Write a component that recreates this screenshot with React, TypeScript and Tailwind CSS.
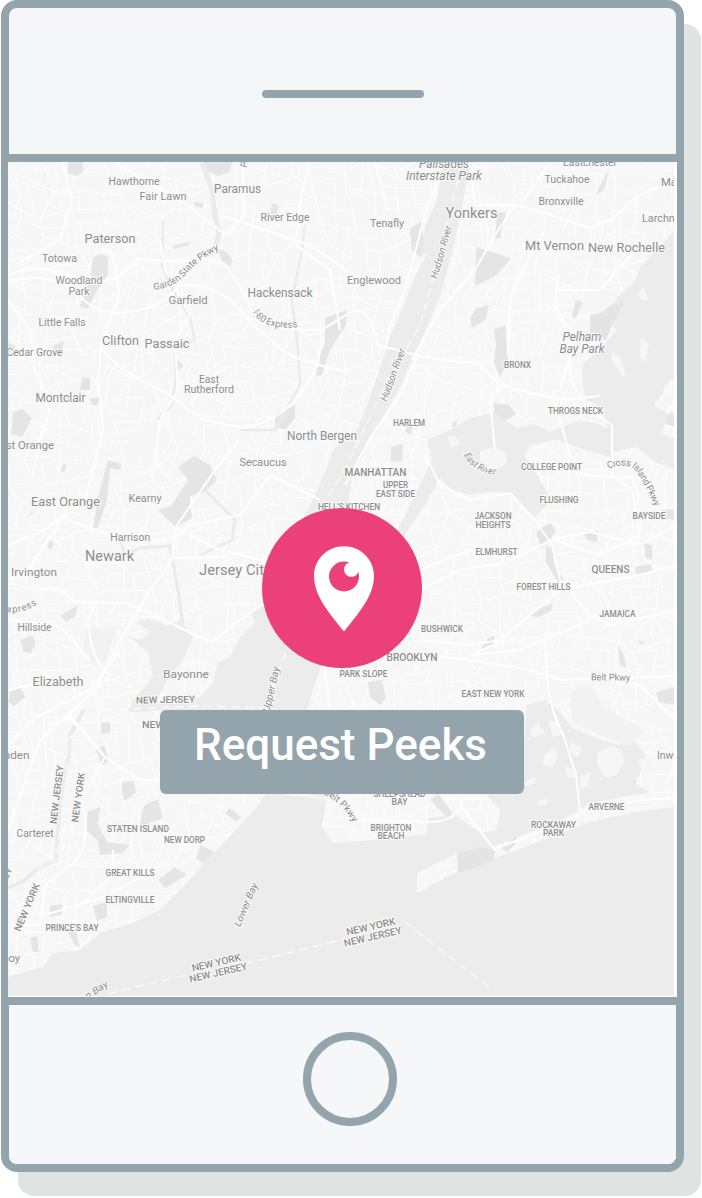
type Label = {
  t: string;
  x: number;
  y: number;
  w: number;
  s?: number;
  r?: number;
  i?: boolean;
  b?: boolean;
};

/* x is the centre of the label, y its baseline, w its drawn width */
const labels: Label[] = [
  { t: "Hawthorne", x: 134, y: 184.5, w: 51, s: 11 },
  { t: "Fair Lawn", x: 163, y: 200, w: 47, s: 11 },
  { t: "Paramus", x: 237.5, y: 193, w: 47, s: 12 },
  { t: "River Edge", x: 285, y: 221, w: 49, s: 11 },
  { t: "Tenafly", x: 387, y: 226.5, w: 34, s: 11 },
  { t: "Paterson", x: 110, y: 243, w: 51, s: 13 },
  { t: "Totowa", x: 59.5, y: 262, w: 35, s: 11 },
  { t: "Woodland", x: 79, y: 284, w: 47, s: 11 },
  { t: "Park", x: 79, y: 295, w: 21, s: 11 },
  { t: "Garfield", x: 188, y: 304, w: 39, s: 11 },
  { t: "Hackensack", x: 280, y: 296.5, w: 65, s: 12 },
  { t: "Englewood", x: 374, y: 284, w: 54, s: 11 },
  { t: "Little Falls", x: 62, y: 326, w: 47, s: 11 },
  { t: "Clifton", x: 120.5, y: 345, w: 37, s: 13 },
  { t: "Passaic", x: 167, y: 348, w: 45, s: 13 },
  { t: "Cedar Grove", x: 34.5, y: 356, w: 56, s: 11 },
  { t: "East", x: 209, y: 382.5, w: 20, s: 11 },
  { t: "Rutherford", x: 209, y: 392.5, w: 50, s: 11 },
  { t: "Montclair", x: 60.5, y: 402, w: 50, s: 12 },
  { t: "North Bergen", x: 322, y: 439.5, w: 70, s: 12 },
  { t: "Secaucus", x: 263, y: 465.5, w: 47, s: 11 },
  { t: "West Orange", x: 22, y: 449, w: 64, s: 11 },
  { t: "East Orange", x: 65.5, y: 505.5, w: 69, s: 12.5 },
  { t: "Kearny", x: 145, y: 502, w: 33, s: 11 },
  { t: "Harrison", x: 130.3, y: 541, w: 40, s: 11 },
  { t: "Newark", x: 109.5, y: 560.5, w: 49, s: 14 },
  { t: "Jersey City", x: 235, y: 574.5, w: 72, s: 14 },
  { t: "Irvington", x: 34, y: 576, w: 46, s: 11 },
  { t: "Hillside", x: 34.5, y: 630.5, w: 34, s: 11 },
  { t: "Elizabeth", x: 58, y: 686, w: 51, s: 12.5 },
  { t: "Bayonne", x: 186, y: 677.5, w: 46, s: 11.5 },
  { t: "Linden", x: 12, y: 759, w: 35, s: 11 },
  { t: "Carteret", x: 35, y: 837, w: 37, s: 11 },
  { t: "Perth Amboy", x: -12, y: 961.5, w: 64, s: 11.5 },
  { t: "Palisades", x: 444, y: 168, w: 50, s: 12, i: true },
  { t: "Interstate Park", x: 444, y: 180, w: 76, s: 12, i: true },
  { t: "Yonkers", x: 471.5, y: 217.5, w: 52, s: 14 },
  { t: "Eastchester", x: 590, y: 166, w: 54, s: 11 },
  { t: "Tuckahoe", x: 567, y: 183, w: 45, s: 11 },
  { t: "Bronxville", x: 561, y: 204.5, w: 45, s: 11 },
  { t: "Mamaroneck", x: 694, y: 185.5, w: 66, s: 11 },
  { t: "Larchmont", x: 668, y: 222, w: 52, s: 11 },
  { t: "Mt Vernon", x: 554.5, y: 250, w: 59, s: 12.5 },
  { t: "New Rochelle", x: 626.5, y: 252, w: 77, s: 12.5 },
  { t: "Pelham", x: 582, y: 341, w: 39, s: 12, i: true },
  { t: "Bay Park", x: 582, y: 353, w: 45, s: 12, i: true },
  { t: "BRONX", x: 517.5, y: 368, w: 27, s: 8.5, b: true },
  { t: "THROGS NECK", x: 575.5, y: 413.5, w: 55, s: 8.5, b: true },
  { t: "HARLEM", x: 409, y: 425.5, w: 32, s: 8.5, b: true },
  { t: "MANHATTAN", x: 375.5, y: 476, w: 62, s: 10, b: true },
  { t: "UPPER", x: 395.5, y: 488, w: 25, s: 8.5, b: true },
  { t: "EAST SIDE", x: 395.5, y: 496.5, w: 39, s: 8.5, b: true },
  { t: "HELL'S KITCHEN", x: 349, y: 509.5, w: 62, s: 8.5, b: true },
  { t: "COLLEGE POINT", x: 551.5, y: 470, w: 61, s: 8.5, b: true },
  { t: "FLUSHING", x: 559, y: 503, w: 39, s: 8.5, b: true },
  { t: "BAYSIDE", x: 649, y: 518.5, w: 33, s: 8.5, b: true },
  { t: "JACKSON", x: 493, y: 519, w: 37, s: 8.5, b: true },
  { t: "HEIGHTS", x: 493, y: 527.5, w: 35, s: 8.5, b: true },
  { t: "ELMHURST", x: 496.5, y: 555, w: 42, s: 8.5, b: true },
  { t: "QUEENS", x: 610.5, y: 573, w: 38, s: 10, b: true },
  { t: "FOREST HILLS", x: 543.5, y: 589.5, w: 54, s: 8.5, b: true },
  { t: "JAMAICA", x: 617.5, y: 617, w: 36, s: 8.5, b: true },
  { t: "BUSHWICK", x: 442, y: 631.5, w: 42, s: 8.5, b: true },
  { t: "BROOKLYN", x: 412, y: 660.5, w: 51, s: 10, b: true },
  { t: "PARK SLOPE", x: 363.5, y: 677, w: 48, s: 8.5, b: true },
  { t: "EAST NEW YORK", x: 493, y: 697, w: 63, s: 8.5, b: true },
  { t: "Belt Pkwy", x: 610.5, y: 680.5, w: 39, s: 9.5, r: 1 },
  { t: "NEW JERSEY", x: 165.5, y: 703, w: 59, s: 9.5, b: true, r: -1 },
  { t: "NEW YORK", x: 168, y: 728, w: 52, s: 9.5, b: true },
  { t: "SHEEPSHEAD", x: 399.5, y: 797, w: 52, s: 8.5, b: true },
  { t: "BAY", x: 399.5, y: 805, w: 16, s: 8.5, b: true },
  { t: "BRIGHTON", x: 391, y: 830.5, w: 41, s: 8.5, b: true },
  { t: "BEACH", x: 391, y: 838.5, w: 27, s: 8.5, b: true },
  { t: "ARVERNE", x: 606.5, y: 809.5, w: 36, s: 8.5, b: true },
  { t: "ROCKAWAY", x: 553.5, y: 827.5, w: 45, s: 8.5, b: true },
  { t: "PARK", x: 553.5, y: 836, w: 21, s: 8.5, b: true },
  { t: "Inwood", x: 674, y: 759, w: 34, s: 11 },
  { t: "STATEN ISLAND", x: 138, y: 832, w: 62, s: 8.5, b: true },
  { t: "NEW DORP", x: 184.5, y: 843, w: 41, s: 8.5, b: true },
  { t: "GREAT KILLS", x: 130, y: 876, w: 49, s: 8.5, b: true },
  { t: "ELTINGVILLE", x: 130, y: 902.5, w: 49, s: 8.5, b: true },
  { t: "PRINCE'S BAY", x: 72, y: 930.5, w: 53, s: 8.5, b: true },
  { t: "NEW JERSEY", x: 60, y: 795, w: 59, s: 9.5, b: true, r: -83 },
  { t: "NEW YORK", x: 81.5, y: 798, w: 50, s: 9.5, b: true, r: -82 },
  { t: "NEW YORK", x: 30, y: 908.5, w: 51, s: 9.5, b: true, r: -67 },
  { t: "NEW JERSEY", x: 0, y: 896, w: 59, s: 9.5, b: true, r: -65 },
  { t: "NEW YORK", x: 217, y: 966, w: 50, s: 10, b: true, r: -13 },
  { t: "NEW JERSEY", x: 219, y: 976, w: 59, s: 10, b: true, r: -13 },
  { t: "NEW YORK", x: 371.5, y: 930, w: 50, s: 10, b: true, r: -13 },
  { t: "NEW JERSEY", x: 373.5, y: 940, w: 59, s: 10, b: true, r: -13 },
  { t: "Hudson River", x: 444.5, y: 253, w: 54, s: 10, i: true, r: -74 },
  { t: "Hudson River", x: 396, y: 376, w: 55, s: 10, i: true, r: -70 },
  { t: "Upper Bay", x: 274.5, y: 690, w: 46, s: 10, i: true, r: -77 },
  { t: "Lower Bay", x: 249, y: 906, w: 46, s: 10, i: true, r: -67 },
  { t: "Raritan Bay", x: 87, y: 1000, w: 52, s: 10, i: true, r: -33 },
  { t: "Pkwy", x: 250, y: 158, w: 22, s: 9.5, r: -70 },
];

const curved = [
  { id: "gsp", t: "Garden State Pkwy", d: "M154 290 Q176 287 187 273 Q198 260 218 250", w: 78, s: 9.5, i: false },
  { id: "i80", t: "I-80 Express", d: "M253 312 Q263 331 299 327", w: 50, s: 9.5, i: false },
  { id: "er", t: "East River", d: "M464 455 Q473 473 498 475", w: 39, s: 9.5, i: true },
  { id: "cip", t: "Cross Island Pkwy", d: "M608 469 Q630 460 638 474 Q648 490 655 507", w: 70, s: 9.5, i: false },
  { id: "ex", t: "Express", d: "M1 611 Q20 616 37 604", w: 38, s: 9.5, i: false },
  { id: "bp", t: "Belt Pkwy", d: "M323 794 Q343 803 353 823", w: 42, s: 9.5, i: false },
];

/* Street mesh: a jittered lattice with some of its edges left out */
function mesh(x0: number, y0: number, x1: number, y1: number, step: number, skip: number, seed: number): string {
  let s = seed;
  const rnd = () => {
    s = (s * 16807) % 2147483647;
    return s / 2147483647;
  };
  const cols = Math.ceil((x1 - x0) / step) + 1;
  const rows = Math.ceil((y1 - y0) / step) + 1;
  const pts: [number, number][][] = [];
  for (let j = 0; j < rows; j++) {
    const row: [number, number][] = [];
    for (let i = 0; i < cols; i++) {
      row.push([
        Math.round(x0 + i * step + (rnd() - 0.5) * step * 0.8 + Math.sin(j * 0.35) * 9),
        Math.round(y0 + j * step + (rnd() - 0.5) * step * 0.8 + Math.sin(i * 0.3) * 10),
      ]);
    }
    pts.push(row);
  }
  let d = "";
  for (let j = 0; j < rows; j++) {
    for (let i = 0; i < cols; i++) {
      const [x, y] = pts[j][i];
      if (i + 1 < cols && rnd() > skip) d += `M${x} ${y}L${pts[j][i + 1][0]} ${pts[j][i + 1][1]}`;
      if (j + 1 < rows && rnd() > skip) d += `M${x} ${y}L${pts[j + 1][i][0]} ${pts[j + 1][i][1]}`;
    }
  }
  return d;
}

const streets = mesh(-10, 150, 700, 1010, 16, 0.25, 4211);
const lanes = mesh(-10, 150, 700, 1010, 27, 0.25, 977);

const water = [
  // Hudson and upper bay
  "M443 162L437 200L425 227L421 255L428 252L417 273L403 307L390 337L380 367L370 397L357 430L333 450L320 485L305 515L285 560L263 603L250 613L255 622L240 637L230 657L217 663L213 683L200 697L175 704L140 703L138 710L230 712L250 740L262 760L280 790L325 797L308 750L307 710L313 690L320 670L330 640L335 580L345 530L352 477L370 440L380 423L400 387L417 350L430 320L440 297L450 260L457 233L465 190L472 162Z",
  // Newark bay
  "M180 620L166 626L160 622L147 619L136 622L151 632L140 640L128 636L148 652L153 677L133 700L128 712L150 712L158 697L168 679L183 660L193 637Z",
  // Lower bay and the ocean
  "M267 792L257 807L233 833L207 860L187 883L160 910L133 923L100 933L80 950L53 953L43 967L8 977L8 998L676 998L676 807L640 811L590 822L517 850L460 870L417 893L417 873L457 853L493 850L480 833L455 815L428 818L427 834L350 842L333 843L322 827L326 800Z",
  // Long Island sound
  "M676 228L663 243L640 267L634 283L617 297L608 320L617 330L597 352L583 363L582 380L586 400L597 405L606 420L610 452L637 447L655 462L676 470L676 440L660 433L668 420L661 398L665 385L676 377Z",
  // East river
  "M450 430L470 418L494 413L517 428L535 424L550 432L580 420L598 424L613 432L613 458L577 447L557 440L530 445L524 455L540 480L552 500L533 519L515 497L497 491L470 495L452 490L440 478L425 505L408 530L395 560L385 556L400 525L415 495L432 460L427 440Z",
  // Jamaica bay
  "M527 705L545 700L560 712L572 728L595 738L618 745L632 738L646 755L640 775L632 783L650 792L590 803L560 822L530 832L517 838L494 846L480 833L497 830L500 810L487 795L485 770L510 765L524 745Z",
];

const parks = [
  "M204 162L232 162L230 172L218 176L206 170Z",
  "M68 162L83 162L83 172L76 176L68 173Z",
  "M93 258Q101 250 108 258L108 274L96 292L88 309L80 306L90 280Z",
  "M173 246L188 242L189 245L174 249Z",
  "M194 202L203 203L203 208L195 207Z",
  "M272 203L279 206L276 215L270 213Z",
  "M218 250Q228 249 232 260L230 267L222 262Z",
  "M325 318L347 310L346 325L330 350L322 375L316 376L318 358L325 345Z",
  "M275 415L295 405L295 418L286 429L275 428Z",
  "M13 412L22 409L32 418L22 437L11 434Z",
  "M82 377L90 378L90 390L80 390Z",
  "M54 345L64 341L62 350L53 356Z",
  "M90 398L100 398L97 406L91 404Z",
  "M7 342L15 346L15 353L8 352Z",
  "M178 360L184 366L178 370L175 366Z",
  "M108 460L122 464L119 470L110 468L107 500L98 528L93 528L98 498Z",
  "M60 472L64 463L67 466L64 472Z",
  "M50 540L54 543L51 550L47 546Z",
  "M27 517L36 508L32 514L27 518Z",
  "M178 467L194 456L210 465L217 480L204 492L190 496L192 518L176 527L158 510L171 506L188 480Z",
  "M20 640L32 635L36 643L31 653L24 652Z",
  "M10 692L20 687L25 697L14 706L8 702Z",
  "M60 616L78 605L75 616L66 622Z",
  "M101 723L110 722L110 733L101 734Z",
  "M96 750L104 745L109 760L102 766Z",
  "M122 782L134 781L136 793L124 801L122 790Z",
  "M145 805L158 799L163 819L150 822L140 830L142 812Z",
  "M88 812L100 807L98 824L107 842L130 845L122 853L100 855L98 841L86 830Z",
  "M225 813L230 808L241 817L236 822Z",
  "M200 845L217 853L207 865L196 859Z",
  "M158 880L175 867L187 875L165 888Z",
  "M50 906L62 904L62 914L50 917Z",
  "M93 906L107 902L107 917L97 921Z",
  "M30 938L37 936L39 952L33 952Z",
  "M67 930L75 927L80 948L74 944Z",
  "M410 229L421 221L424 240L421 258L412 250Z",
  "M497 213L506 212L500 238L495 239Z",
  "M476 247L511 258L498 274L488 280L475 286Z",
  "M476 308L489 305L486 320L472 328L470 318Z",
  "M494 330L505 325L508 360L500 378L494 363L496 346Z",
  "M602 182L609 170L604 190L595 195Z",
  "M576 300L583 302L576 318L572 316Z",
  "M590 315L601 313L620 298L624 306L613 325L600 338L590 333Z",
  "M494 403L509 405L516 414L505 421L494 414Z",
  "M452 424L457 420L456 427L452 427Z",
  "M391 447L403 444L402 461L391 462Z",
  "M407 423L413 425L411 435L405 432Z",
  "M536 532L550 523L556 530L549 542L541 548Z",
  "M546 546L552 548L555 566L564 580L558 582L546 562Z",
  "M584 534L598 531L597 543L588 540Z",
  "M530 616L541 608L553 603L551 611L538 617Z",
  "M479 653L488 638L495 636L492 647Z",
  "M635 567L650 564L654 572L636 574Z",
  "M644 543L652 545L652 560L646 558Z",
  "M637 640L645 642L642 645Z",
  "M618 645L624 655L626 668L620 665Z",
  "M368 682L382 680L386 698L380 705L370 697Z",
  "M430 800L438 794L453 813L448 818Z",
  "M625 786L630 777L636 778L635 792L628 796Z",
  "M656 693L676 686L676 705L659 702Z",
  "M664 417L672 412L676 418L676 427L665 424Z",
  "M661 510L676 509L676 519L666 519Z",
];

const islands = [
  "M480 451L493 447L506 452L507 462L498 470L487 468L480 460Z",
  "M448 437L456 436L461 445L450 447Z",
  "M643 287L648 299L644 302L637 294Z",
  "M641 338L649 344L645 362L640 358Z",
  "M612 350L620 358L626 374L622 377L612 360Z",
  "M605 293L613 290L610 306L597 313L585 310L584 292Z",
  "M545 754L554 747L558 758L552 767L542 765Z",
  "M526 781L536 777L534 784L525 786Z",
  "M565 767L577 770L576 778L567 777Z",
  "M598 752L610 746L622 750L624 762L617 775L606 778L597 765Z",
  "M580 776L590 772L588 786L580 790Z",
  "M538 800L548 799L547 805L538 805Z",
  "M639 760L650 755L655 772L643 776Z",
  "M548 720L557 722L560 735L553 737Z",
  "M530 730L538 722L545 733L534 738Z",
  "M654 403L666 392L672 398L666 412L657 408Z",
  "M571 742L582 748L578 757L570 752Z",
];

const highways = [
  "M8 275Q40 262 75 277T138 259Q170 262 195 260T226 265Q240 285 247 300Q255 320 270 325T322 330Q340 318 352 312T372 325L378 345L412 354Q440 361 478 363L500 385L560 400L600 396",
  "M8 281Q50 272 75 290Q95 318 130 312T180 285Q215 282 240 310T290 355Q320 367 350 372",
  "M103 350Q120 372 165 392L203 420L245 428Q280 420 300 395L318 365L322 330",
  "M8 300L30 330L35 370L50 410L40 440",
  "M110 250Q120 275 118 300L102 340L98 380L103 430L85 500L62 518L110 535L150 540Q175 540 190 525L240 515L270 475L320 500",
  "M375 162L385 200M440 175L425 215L405 290L390 325L385 350",
  "M240 440L215 470L175 528L172 560L150 590L120 640L95 690L40 740L8 830",
  "M172 558L225 557M175 528L215 548L260 560L300 560",
  "M62 518L25 575L8 580M40 590Q55 582 75 602L125 603Q165 620 195 635L212 642L240 620L270 600",
  "M95 603L88 620Q90 660 110 675L70 715L105 757L140 780L170 780",
  "M8 745L35 718L90 690L120 650M105 757L82 800Q92 840 75 862L45 885L40 925L8 925M45 915L110 895L160 865",
  "M50 725L70 718L105 757M113 850L113 875L75 910",
  "M418 354L400 395L372 435L345 485M412 360L440 310L475 270L495 235L515 205L545 213L590 228L610 220L640 195L674 180",
  "M545 230L525 265L510 300L508 355M555 290L600 290L640 245M500 385L490 400L495 450M558 275L555 305L575 340L560 390",
  "M570 335L570 380L590 410L612 425L612 475L632 490L640 535L600 555L555 540",
  "M553 390L560 420L570 455L582 475L632 478L640 500",
  "M425 455L440 485L470 500L510 493L535 520L552 545L560 580L590 615L610 625L676 610",
  "M420 570L470 550L510 560L552 540L590 532L640 545L676 525",
  "M421 590L460 570L505 563M421 640L470 645L500 640L560 590L640 575L676 565",
  "M421 655L470 660L530 670L562 680L676 676M505 640L470 655L520 650L590 620",
  "M545 640L548 690L557 725M590 677L640 685L676 720M552 709L565 740L576 775L580 812",
  "M325 670L330 710M580 812L640 800L676 798M495 850L460 805M493 850L580 815",
  "M350 820L430 822Q460 822 462 798M62 162L72 200L60 240L20 262M310 162L300 200L296 245L330 270L340 330",
  "M243 162L244 215L226 235L180 200L140 178L115 162M220 215L310 245L360 280M470 162L475 205L520 205L550 162",
  "M8 620L60 626L90 660M8 690L50 680M8 545L45 530L85 500M160 240L165 270L190 315L175 340L178 390L160 420L155 460L170 480",
];

const dense = [
  { p: "M372 442L400 400L425 360L432 372L420 440L432 450L410 500L385 540L330 540L345 490Z", f: "url(#g1)" },
  { p: "M432 330L490 290L495 400L440 430L410 440Z", f: "url(#g1)" },
  { p: "M422 540L530 520L540 600L510 660L421 650Z", f: "url(#g2)" },
  { p: "M320 675L500 655L520 710L320 712Z", f: "url(#g3)" },
  { p: "M555 500L660 495L674 660L570 660Z", f: "url(#g2)" },
  { p: "M335 797L428 797L425 825L335 828Z", f: "url(#g3)" },
  { p: "M30 470L110 490L140 560L80 620L20 600Z", f: "url(#g4)" },
  { p: "M200 535L262 530L262 590L215 640L190 630Z", f: "url(#g4)" },
  { p: "M90 190L150 180L160 280L100 290Z", f: "url(#g4)" },
  { p: "M500 220L560 215L560 360L505 350Z", f: "url(#g3)" },
  { p: "M165 345L320 380L330 430L230 470L200 430Z", f: "url(#g4)" },
  { p: "M245 770L260 795L205 858L165 850Z", f: "url(#g4)" },
];

function TileMap() {
  return (
    <svg
      className="absolute top-0 left-0 block h-[834px] w-[666px]"
      viewBox="8 162 666 834"
      fontFamily='Roboto, "Liberation Sans", sans-serif'
    >
      <defs>
        <pattern id="g1" width="4.5" height="9" patternUnits="userSpaceOnUse" patternTransform="rotate(28)">
          <path d="M0 0H4.5M0 0V9" stroke="#fff" strokeWidth="1" fill="none" />
        </pattern>
        <pattern id="g2" width="8" height="12" patternUnits="userSpaceOnUse" patternTransform="rotate(-18)">
          <path d="M0 0H8M0 0V12" stroke="#fff" strokeWidth="1" fill="none" />
        </pattern>
        <pattern id="g3" width="9" height="7" patternUnits="userSpaceOnUse" patternTransform="rotate(8)">
          <path d="M0 0H9M0 0V7" stroke="#fff" strokeWidth="1" fill="none" />
        </pattern>
        <pattern id="g4" width="8" height="13" patternUnits="userSpaceOnUse" patternTransform="rotate(32)">
          <path d="M0 0H8M0 0V13" stroke="#fff" strokeWidth="1" fill="none" />
        </pattern>
        {curved.map((c) => (
          <path key={c.id} id={c.id} d={c.d} />
        ))}
      </defs>
      <rect x="8" y="162" width="666" height="834" fill="#f7f7f7" />
      <path d={streets} stroke="#fff" strokeWidth="0.9" fill="none" opacity="0.7" />
      <path d={lanes} stroke="#fff" strokeWidth="1.2" fill="none" opacity="0.75" />
      {dense.map((g) => (
        <path key={g.p} d={g.p} fill={g.f} opacity="0.5" />
      ))}
      <g fill="#e5e5e5">
        {parks.map((d) => (
          <path key={d} d={d} />
        ))}
      </g>
      <g fill="#ececec">
        {water.map((d) => (
          <path key={d} d={d} />
        ))}
      </g>
      <g fill="none" stroke="#ebebeb" strokeLinejoin="round">
        <path strokeWidth="5" d="M202 162L208 178L212 190L215 215L219 232L215 250" />
        <path strokeWidth="2.5" d="M163 220L162 265L170 285L190 318L195 340L175 350L176 378L172 405L157 420" />
        <path strokeWidth="2.5" d="M305 225L302 250L292 300L298 350L300 385L275 430L240 430" />
        <path strokeWidth="3" d="M120 540L125 555L140 548L170 546L178 590L183 625M205 490L235 520L232 540L200 555" />
        <path strokeWidth="4" d="M84 710L70 735L68 760L60 800L56 860L38 868L25 880L8 888" />
      </g>
      <g fill="#f6f6f6">
        {islands.map((d) => (
          <path key={d} d={d} />
        ))}
        <path d="M570 690L590 686L604 706L625 720L645 730L630 746L600 735L572 722Z" fill="#f2f2f2" />
        <path d="M85 630L118 625L104 665L93 665L84 650Z" fill="#f2f2f2" />
      </g>
      <g fill="#e4e4e4">
        <path d="M457 853L480 847L495 850L494 860L470 870L458 873Z" />
        <path d="M500 846L508 843L517 836L515 845L506 852Z" />
        <path d="M590 320L612 306L624 302L612 325L606 340L592 334Z" />
      </g>
      <g fill="none" stroke="#fff" strokeWidth="2" strokeLinejoin="round">
        {highways.map((d) => (
          <path key={d} d={d} />
        ))}
      </g>
      <g fill="none" stroke="#fafafa" strokeWidth="1.4" strokeDasharray="9 5">
        <path d="M108 994L190 974M245 964L344 939M404 922L410 926L489 987" />
        <path d="M458 180L438 260L420 325L385 385L345 470L322 505M290 640L272 690L265 712" />
        <path d="M82 725L68 740L66 790L56 860L22 875M105 710L200 706L270 708" />
      </g>
      <g fill="#8e8e8e" stroke="#f9f9f9" strokeWidth="2.2" strokeLinejoin="round" style={{ paintOrder: "stroke" }}>
        {labels.map((l) => (
          <text
            key={`${l.t}${l.x}-${l.y}`}
            x={l.x}
            y={l.y}
            fontSize={l.s}
            textAnchor="middle"
            textLength={l.w}
            lengthAdjust="spacingAndGlyphs"
            fontStyle={l.i ? "italic" : undefined}
            fontWeight={l.b ? 500 : 400}
            transform={l.r ? `rotate(${l.r} ${l.x} ${l.y})` : undefined}
          >
            {l.t}
          </text>
        ))}
        {curved.map((c) => (
          <text key={c.id} fontSize={c.s} fontStyle={c.i ? "italic" : undefined}>
            <textPath href={`#${c.id}`} textLength={c.w}>
              {c.t}
            </textPath>
          </text>
        ))}
      </g>
    </svg>
  );
}

function PeekPin() {
  return (
    <svg className="ml-1 h-[86px] w-[60px]" viewBox="314 546 60 86">
      <path
        d="M344 546.3C327.4 546.3 314 559.5 314 576C314 596 330 614 344 631.5C358 614 374 596 374 576C374 559.5 360.6 546.3 344 546.3Z"
        fill="#fff"
      />
      <circle cx="344" cy="576.5" r="15" fill="#ec407a" />
      <circle cx="351.4" cy="569.4" r="7.4" fill="#fff" />
    </svg>
  );
}

export default function App() {
  return (
    <div className="h-[1198px] w-[702px] overflow-hidden bg-white pl-px">
      <div className="flex h-[1172px] w-[683px] flex-col rounded-[16px] border-8 border-[#93a4ac] bg-[#f5f6f8] shadow-[17px_24px_0_#dfe3e2]">
        <header className="flex h-[146px] shrink-0 justify-center pt-[82px] pl-px">
          <div className="h-2 w-[162px] rounded-full bg-[#93a4ac]" />
        </header>
        <main className="relative -mx-px h-[851px] shrink-0 border-y-8 border-[#93a4ac] bg-white">
          <TileMap />
          <div className="relative flex flex-col items-center pt-[346px] pr-px">
            <div className="flex h-40 w-40 items-center justify-center rounded-full bg-[#ec407a] pt-[2px]">
              <PeekPin />
            </div>
            <button className="mt-[42px] flex h-[84px] w-[364px] items-center justify-center rounded-[6px] bg-[#93a4ac] pr-[3px] pb-[14px] font-[Roboto,sans-serif] text-[44px] leading-none font-medium whitespace-nowrap text-white">
              Request Peeks
            </button>
          </div>
        </main>
        <footer className="flex flex-1 justify-center rounded-b-[8px] bg-[#f5f7f8] pt-[27px] pl-[14px]">
          <div className="h-[94px] w-[94px] rounded-full border-8 border-[#93a4ac]" />
        </footer>
      </div>
    </div>
  );
}
